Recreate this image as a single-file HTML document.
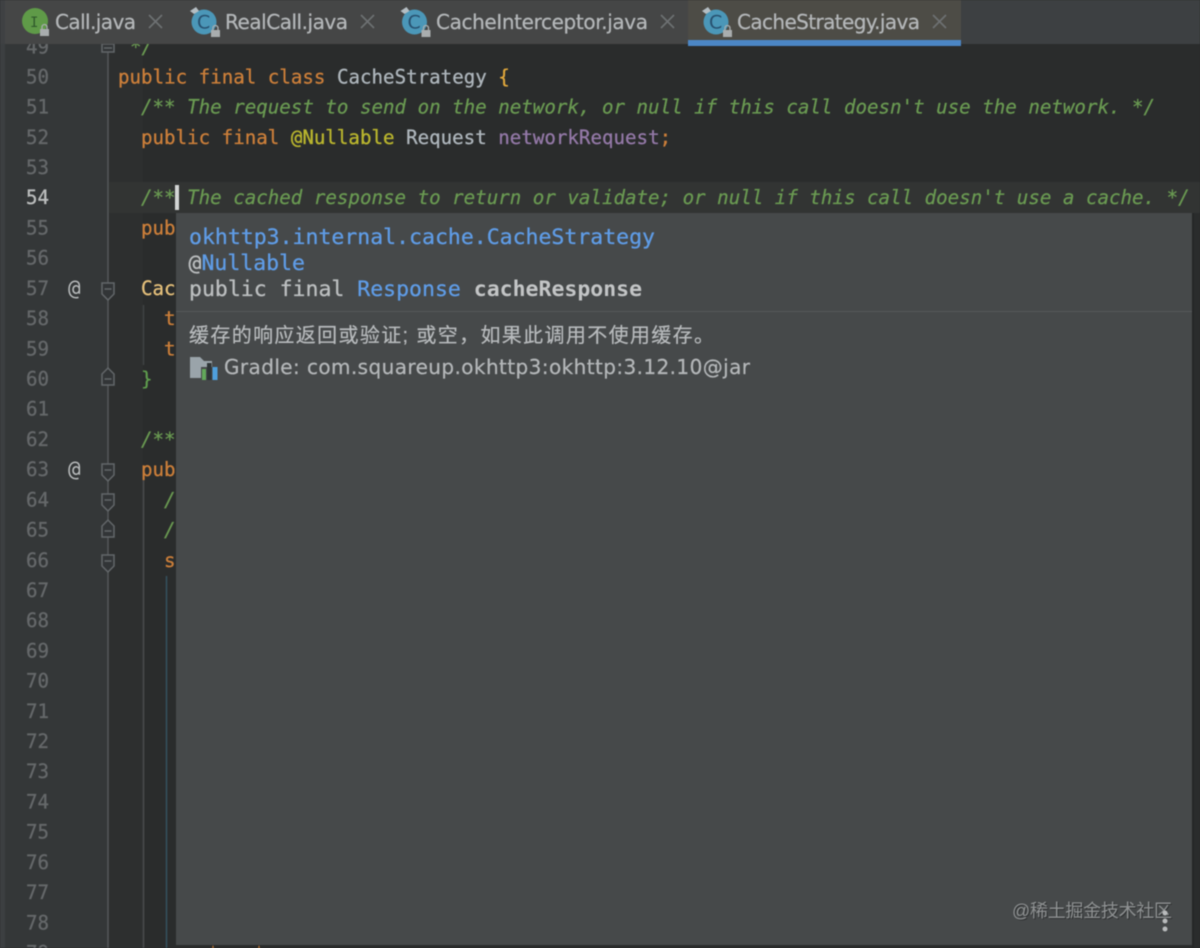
<!DOCTYPE html>
<html lang="en">
<head>
<meta charset="utf-8">
<title>CacheStrategy.java</title>
<style>
html,body{margin:0;padding:0;width:1200px;height:948px;overflow:hidden;background:#2b2c2c}
svg{display:block;filter:blur(0.5px)}
.m{font-family:"DejaVu Sans Mono","Liberation Mono",monospace;font-size:19.15px;white-space:pre}
.n{font-family:"DejaVu Sans Mono","Liberation Mono",monospace;font-size:19.15px;fill:#65686a;stroke:#65686a;stroke-width:.3}
.t{font-family:"DejaVu Sans Mono","Liberation Mono",monospace;font-size:21.5px;white-space:pre}
.s{font-family:"DejaVu Sans","Liberation Sans",sans-serif;font-size:20px;fill:#b4b7b9;stroke:#b4b7b9;stroke-width:.25}
.k{fill:#cc7f3a;stroke:#cc7f3a;stroke-width:.3}.c{fill:#6a9a52;font-style:italic;stroke:#6a9a52;stroke-width:.25}.w{fill:#aeb6bc;stroke:#aeb6bc;stroke-width:.3}
.x{stroke:#6e7173;stroke-width:1.6;fill:none}
.f{fill:#323537;stroke:#63676a;stroke-width:1.5}
.fl{stroke:#63676a;stroke-width:1.5}
.b{fill:#5f9ce6;stroke:#5f9ce6;stroke-width:.3}
.g{fill:#bcbfc0;stroke:#bcbfc0;stroke-width:.3}
</style>
</head>
<body>
<svg width="1200" height="948" viewBox="0 0 1200 948" xmlns="http://www.w3.org/2000/svg">
<rect width="1200" height="948" fill="#2a2c2c"/>
<rect x="0" y="44" width="5" height="904" fill="#3c3f41"/>
<rect x="5" y="44" width="103" height="904" fill="#343738"/>
<rect x="109" y="44" width="34" height="904" fill="#2d2f2f"/>
<rect x="109" y="182" width="1091" height="31" fill="#323433"/>

<!-- gutter guides -->
<line x1="108" y1="44" x2="108" y2="948" stroke="#55585a" stroke-width="1.5"/>
<line x1="143.5" y1="305" x2="143.5" y2="365" stroke="#3f4243" stroke-width="1.5"/>
<line x1="143.5" y1="480" x2="143.5" y2="948" stroke="#4a4c4d" stroke-width="1.5"/>
<line x1="166.5" y1="576" x2="166.5" y2="948" stroke="#34515f" stroke-width="1.5"/>

<g transform="translate(0 .4)">
<!-- line numbers -->
<g class="n">
<text x="26" y="53">49</text><text x="26" y="83">50</text><text x="26" y="113.2">51</text><text x="26" y="143.4">52</text><text x="26" y="173.6">53</text>
<text x="26" y="203.8" style="fill:#bcbebe;stroke:#bcbebe">54</text>
<text x="26" y="234">55</text><text x="26" y="264.3">56</text><text x="26" y="294.5">57</text><text x="26" y="324.7">58</text><text x="26" y="354.9">59</text><text x="26" y="385.1">60</text><text x="26" y="415.3">61</text><text x="26" y="445.5">62</text><text x="26" y="475.7">63</text><text x="26" y="505.9">64</text><text x="26" y="536.2">65</text><text x="26" y="566.4">66</text><text x="26" y="596.6">67</text><text x="26" y="626.8">68</text><text x="26" y="657">69</text><text x="26" y="687.2">70</text><text x="26" y="717.4">71</text><text x="26" y="747.6">72</text><text x="26" y="777.8">73</text><text x="26" y="808">74</text><text x="26" y="838.2">75</text><text x="26" y="868.5">76</text><text x="26" y="898.7">77</text><text x="26" y="928.9">78</text><text x="26" y="959">79</text>
</g>
<g class="m" style="fill:#b9bcbd;font-size:21px"><text x="68" y="294.5">@</text><text x="68" y="475.7">@</text></g>

<!-- code -->
<g class="m">
<text x="130" y="53" class="c">*/</text>
<text x="118" y="83"><tspan class="k">public final class </tspan><tspan class="w">CacheStrategy </tspan><tspan fill="#e3a93c" stroke="#e3a93c" stroke-width=".3">{</tspan></text>
<text x="141" y="113.2" class="c">/** The request to send on the network, or null if this call doesn't use the network. */</text>
<text x="141" y="143.4"><tspan class="k">public final </tspan><tspan fill="#b9b52e" stroke="#b9b52e" stroke-width=".35">@Nullable </tspan><tspan class="w">Request </tspan><tspan fill="#9479a8" stroke="#9479a8" stroke-width=".3">networkRequest</tspan><tspan class="k">;</tspan></text>
<text x="141" y="203.8" class="c">/** The cached response to return or validate; or null if this call doesn't use a cache. */</text>
<text x="141" y="234" class="k">pub</text>
<text x="141" y="294.5" fill="#e5c07b" stroke="#e5c07b" stroke-width=".3">Cac</text>
<text x="164" y="324.7" class="k">t</text>
<text x="164" y="354.9" class="k">t</text>
<text x="141" y="385.1" fill="#5f9e4e" stroke="#5f9e4e" stroke-width=".3">}</text>
<text x="141" y="445.5" class="c">/**</text>
<text x="141" y="475.7" class="k">pub</text>
<text x="164" y="505.9" class="c">/</text>
<text x="164" y="536.2" class="c">/</text>
<text x="164" y="566.4" class="k">s</text>
</g>
</g>

<!-- fold markers -->
<path class="f" d="M102 44v8h12v-8z"/><line class="fl" x1="104" y1="48" x2="112" y2="48"/>
<path class="f" d="M102 283h12v11l-6 6-6-6z"/><line class="fl" x1="104.5" y1="289" x2="111.5" y2="289"/>
<path class="f" d="M102 385v-11l6-6 6 6v11z"/><line class="fl" x1="104.5" y1="379" x2="111.5" y2="379"/>
<path class="f" d="M102 464h12v11l-6 6-6-6z"/><line class="fl" x1="104.5" y1="470" x2="111.5" y2="470"/>
<path class="f" d="M102 494h12v11l-6 6-6-6z"/><line class="fl" x1="104.5" y1="500" x2="111.5" y2="500"/>
<path class="f" d="M102 537v-11l6-6 6 6v11z"/><line class="fl" x1="104.5" y1="531" x2="111.5" y2="531"/>
<path class="f" d="M102 555h12v11l-6 6-6-6z"/><line class="fl" x1="104.5" y1="561" x2="111.5" y2="561"/>

<rect x="175" y="185" width="4" height="25" fill="#d2d4d4"/>

<!-- tooltip -->
<rect x="176" y="213" width="1016" height="732" fill="#46494a"/>
<rect x="1192" y="213" width="2" height="735" fill="#252727"/>
<line x1="176" y1="311.5" x2="1192" y2="311.5" stroke="#55585a" stroke-width="1"/>
<g class="t">
<text x="189" y="244" class="b">okhttp3.internal.cache.CacheStrategy</text>
<text x="188.500" y="270"><tspan class="g">@</tspan><tspan class="b">Nullable</tspan></text>
<text x="189" y="296"><tspan class="g">public final </tspan><tspan class="b">Response </tspan><tspan font-weight="bold" fill="#c3c5c6">cacheResponse</tspan></text>
</g>
<text x="189" y="342" textLength="525" style="font-family:'Liberation Sans','Noto Sans CJK SC',sans-serif;font-size:20px;fill:#b8bbbd;stroke:#b8bbbd;stroke-width:.2">缓存的响应返回或验证; 或空，如果此调用不使用缓存。</text>
<!-- gradle icon -->
<path d="M190 357h10l4 4h8v17h-22z" fill="#9aa4aa"/>
<rect x="201" y="367" width="17" height="13" fill="#46494a"/>
<rect x="202" y="369" width="4" height="11" fill="#62a85a"/>
<rect x="207" y="363" width="4.500" height="17" fill="#2e3436"/>
<rect x="212.500" y="367" width="5" height="13" fill="#4f9fdc"/>
<text class="s" x="224" y="374" textLength="526">Gradle: com.squareup.okhttp3:okhttp:3.12.10@jar</text>

<!-- orange fragments below tooltip -->
<path d="M212 948l1-3 1 3zM258 948l1-3 1 3z" fill="#c77b36"/>

<!-- tab bar -->
<rect x="0" y="0" width="1200" height="44" fill="#3d4042"/>
<rect x="0" y="0" width="960" height="44" fill="#454646"/>
<rect x="0" y="0" width="5" height="44" fill="#3f4143"/>
<rect x="688" y="0" width="273" height="41" fill="#4d4c46"/>
<rect x="688" y="40" width="273" height="6" fill="#4b86c5"/>
<rect x="961" y="44" width="239" height="2" fill="#2a2c2c"/>

<!-- tab icons -->
<circle cx="35" cy="21" r="13" fill="#5f9a48"/>
<text x="30" y="27" style="font-family:'DejaVu Sans Mono',monospace;font-size:14px;fill:#2f5a2c">I</text>
<rect x="40" y="29" width="9" height="7" fill="#a9adae"/><path d="M42 29v-2a2.500 2.500 0 0 1 5 0v2" fill="none" stroke="#a9adae" stroke-width="1.300"/>

<g>
<circle cx="204" cy="22" r="12.500" fill="#4b97b8"/>
<path d="M190 11l6-4 3 4-5 3z" fill="#b4bdc2"/>
<text x="197" y="28.500" style="font-family:'DejaVu Sans',sans-serif;font-size:19px;fill:#27506f">C</text>
<rect x="211" y="30" width="9" height="7" fill="#a9adae"/><path d="M213 30v-2a2.500 2.500 0 0 1 5 0v2" fill="none" stroke="#a9adae" stroke-width="1.300"/>
</g>
<g transform="translate(210.500 0)">
<circle cx="204" cy="22" r="12.500" fill="#4b97b8"/>
<path d="M190 11l6-4 3 4-5 3z" fill="#b4bdc2"/>
<text x="197" y="28.500" style="font-family:'DejaVu Sans',sans-serif;font-size:19px;fill:#27506f">C</text>
<rect x="211" y="30" width="9" height="7" fill="#a9adae"/><path d="M213 30v-2a2.500 2.500 0 0 1 5 0v2" fill="none" stroke="#a9adae" stroke-width="1.300"/>
</g>
<g transform="translate(512 0)">
<circle cx="204" cy="22" r="12.500" fill="#4b97b8"/>
<path d="M190 11l6-4 3 4-5 3z" fill="#b4bdc2"/>
<text x="197" y="28.500" style="font-family:'DejaVu Sans',sans-serif;font-size:19px;fill:#27506f">C</text>
<rect x="211" y="30" width="9" height="7" fill="#a9adae"/><path d="M213 30v-2a2.500 2.500 0 0 1 5 0v2" fill="none" stroke="#a9adae" stroke-width="1.300"/>
</g>

<!-- tab labels -->
<g class="s">
<text x="55" y="29" textLength="81">Call.java</text>
<text x="225" y="29" textLength="123">RealCall.java</text>
<text x="436" y="29" textLength="212">CacheInterceptor.java</text>
<text x="737" y="29" textLength="183">CacheStrategy.java</text>
</g>
<path class="x" d="M149 15l13 13M162 15l-13 13"/>
<path class="x" d="M361 15l13 13M374 15l-13 13"/>
<path class="x" d="M661 15l13 13M674 15l-13 13"/>
<path class="x" d="M933 15l13 13M946 15l-13 13"/>

<!-- watermark -->
<text x="1013" y="918" textLength="160" style="font-family:'Liberation Sans','Noto Sans CJK SC',sans-serif;font-size:18px;fill:#2f3132">@稀土掘金技术社区</text>
<text x="1012" y="917" textLength="160" style="font-family:'Liberation Sans','Noto Sans CJK SC',sans-serif;font-size:18px;fill:#8f9293">@稀土掘金技术社区</text>
<circle cx="1165" cy="913" r="2.500" fill="#b9bbbc"/>
<circle cx="1165" cy="921" r="2.500" fill="#b9bbbc"/>
<circle cx="1165" cy="929" r="2.500" fill="#b9bbbc"/>
</svg>
</body>
</html>
